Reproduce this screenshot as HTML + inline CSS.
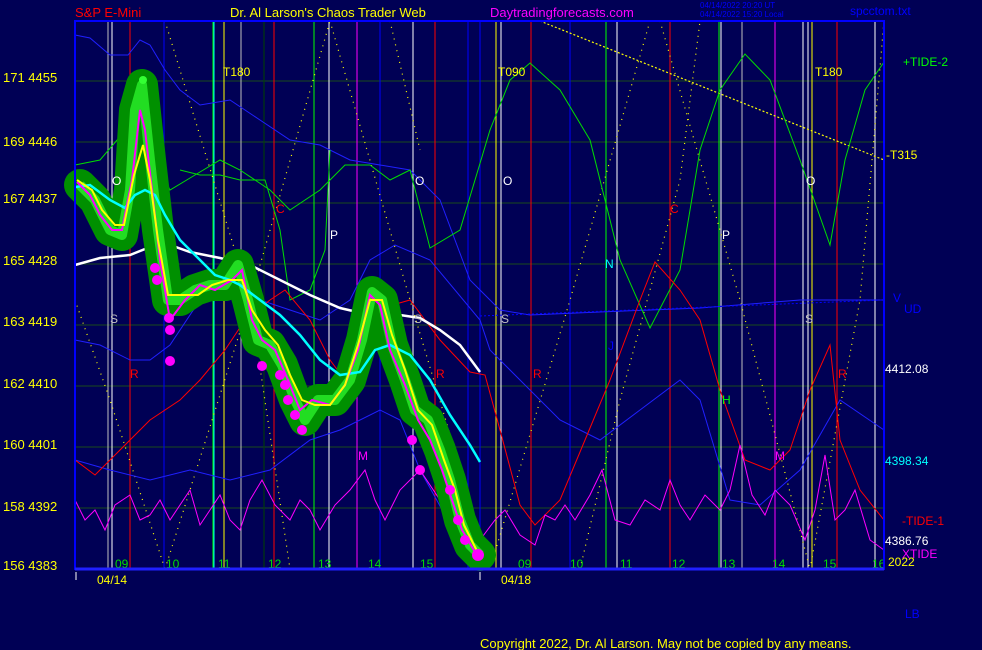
<!DOCTYPE html>
<html><head><style>
html,body{margin:0;padding:0;background:#000055;}
svg{display:block;font-family:"Liberation Sans",sans-serif;font-size:13px;}
</style></head><body>
<svg width="982" height="650" viewBox="0 0 982 650" xmlns="http://www.w3.org/2000/svg">
<rect width="982" height="650" fill="#000055"/>
<!-- header -->
<text x="75" y="17" fill="#ff0000" font-size="13">S&amp;P E-Mini</text>
<text x="230" y="17" fill="#ffff00" font-size="13">Dr. Al Larson's Chaos Trader Web</text>
<text x="490" y="17" fill="#ff00ff" font-size="13">Daytradingforecasts.com</text>
<text x="700" y="8" fill="#0000ff" font-size="8">04/14/2022 20:20 UT</text>
<text x="700" y="17" fill="#0000ff" font-size="8">04/14/2022 15:20 Local</text>
<text x="850" y="15" fill="#0000ff" font-size="12">spcctom.txt</text>
<!-- horizontal grid -->
<g stroke="#1a4a1a" stroke-width="1">
<line x1="75" y1="81" x2="884" y2="81"/><line x1="75" y1="142" x2="884" y2="142"/>
<line x1="75" y1="203" x2="884" y2="203"/><line x1="75" y1="264" x2="884" y2="264"/>
<line x1="75" y1="325" x2="884" y2="325"/><line x1="75" y1="386" x2="884" y2="386"/>
<line x1="75" y1="447" x2="884" y2="447"/><line x1="75" y1="508" x2="884" y2="508"/>
</g>
<!-- vertical lines -->
<g stroke-width="1">
<line x1="108" y1="21" x2="108" y2="569" stroke="#c0c0c0"/>
<line x1="112" y1="21" x2="112" y2="569" stroke="#ffffff"/>
<line x1="130" y1="21" x2="130" y2="569" stroke="#ff0000"/>
<line x1="164" y1="21" x2="164" y2="569" stroke="#0000ff"/>
<line x1="213" y1="21" x2="213" y2="569" stroke="#00ff00"/>
<line x1="214" y1="21" x2="214" y2="569" stroke="#00ffff"/>
<line x1="224" y1="21" x2="224" y2="569" stroke="#ffff00"/>
<line x1="241" y1="21" x2="241" y2="569" stroke="#c0c0c0"/>
<line x1="264" y1="21" x2="264" y2="569" stroke="#004400"/>
<line x1="274" y1="21" x2="274" y2="569" stroke="#ff0000"/>
<line x1="314" y1="21" x2="314" y2="569" stroke="#00ff00"/>
<line x1="329" y1="21" x2="329" y2="569" stroke="#ffffff"/>
<line x1="357" y1="21" x2="357" y2="569" stroke="#ff00ff"/>
<line x1="380" y1="21" x2="380" y2="569" stroke="#0000ff"/>
<line x1="413" y1="21" x2="413" y2="569" stroke="#ffffff"/>
<line x1="435" y1="21" x2="435" y2="569" stroke="#ff0000"/>
<line x1="468" y1="21" x2="468" y2="569" stroke="#0000ff"/>
<line x1="480" y1="21" x2="480" y2="569" stroke="#0000ff"/>
<line x1="496" y1="21" x2="496" y2="569" stroke="#ffff00"/>
<line x1="501" y1="21" x2="501" y2="569" stroke="#ffffff"/>
<line x1="531" y1="21" x2="531" y2="569" stroke="#ff0000"/>
<line x1="570" y1="21" x2="570" y2="569" stroke="#0000ff"/>
<line x1="606" y1="21" x2="606" y2="569" stroke="#00ff00"/>
<line x1="617" y1="21" x2="617" y2="569" stroke="#ffffff"/>
<line x1="670" y1="21" x2="670" y2="569" stroke="#ff0000"/>
<line x1="719" y1="21" x2="719" y2="569" stroke="#00ff00"/>
<line x1="721" y1="21" x2="721" y2="569" stroke="#ffffff"/>
<line x1="742" y1="21" x2="742" y2="569" stroke="#c0c0c0"/>
<line x1="775" y1="21" x2="775" y2="569" stroke="#ff00ff"/>
<line x1="803" y1="21" x2="803" y2="569" stroke="#ffffff"/>
<line x1="808" y1="21" x2="808" y2="569" stroke="#ffffff"/>
<line x1="812" y1="21" x2="812" y2="569" stroke="#ffff00"/>
<line x1="837" y1="21" x2="837" y2="569" stroke="#ff0000"/>
<line x1="875" y1="21" x2="875" y2="569" stroke="#ffffff"/>
</g>
<!-- yellow dotted diagonals -->
<g stroke="#ffff00" stroke-width="1.2" stroke-dasharray="1 5" fill="none">
<polyline points="75,300 110,400 165,569"/>
<polyline points="165,21 250,300 290,569"/>
<polyline points="165,569 250,300 330,21"/>
<polyline points="330,21 410,300 490,569"/>
<polyline points="390,21 420,150"/>
<polyline points="490,569 570,300 650,21"/>
<polyline points="660,21 740,300 810,569"/>
<polyline points="810,569 860,300 884,21"/>
<polyline points="580,569 620,400 680,180 700,21"/>
<polyline points="540,21 884,160" stroke-dasharray="2 2"/>
</g>
<!-- blue curves -->
<g fill="none" stroke-width="1">
<polyline stroke="#2020ff" points="75,35 90,38 110,55 128,55 140,40 150,45 165,70 180,90 200,105 230,100 260,120 290,140 320,145 350,160 380,165 410,170 440,200 470,280 500,310 530,315 600,312 700,308 800,300 884,300"/>
<polyline stroke="#2020ff" points="75,340 100,345 130,360 150,360 170,345 200,300 240,280 260,300 290,310 320,320 350,300 370,260 395,245 430,260 480,320 490,350 520,380 560,420 600,440 640,410 680,380 700,400 730,500 760,505 800,470 840,400 884,430"/>
<polyline stroke="#2020ff" points="75,460 110,470 150,480 190,470 230,480 270,470 310,440 340,430 380,410 400,420 420,470 470,560"/>
<polyline stroke="#0000ff" stroke-dasharray="2 2" points="480,316 884,300"/>
</g>
<!-- green TIDE-2 -->
<polyline fill="none" stroke="#00dd00" stroke-width="1" points="75,165 100,160 130,125 150,150 170,190 195,175 220,160 240,170 270,190 290,210 320,190 345,165 370,165 390,180 410,170 430,248 460,230 490,130 510,80 530,63 560,90 590,140 620,260 650,328 680,270 700,150 720,90 745,54 770,80 800,160 830,245 845,160 865,90 884,62"/>
<polyline fill="none" stroke="#00dd00" stroke-width="1" points="180,170 200,175 220,175 240,180 265,180 280,230 290,300 310,290 325,250 330,150"/>
<!-- red TIDE-1 -->
<polyline fill="none" stroke="#ff0000" stroke-width="1" points="75,460 95,475 120,450 150,420 180,400 200,380 225,350 245,320 270,300 285,290 310,320 330,360 345,380 375,310 410,300 440,340 470,372 485,375 500,430 520,505 535,525 560,500 585,440 610,380 640,300 655,262 680,290 700,320 720,390 745,460 770,470 790,450 810,390 830,345 840,440 860,490 884,520"/>
<!-- magenta XTIDE -->
<polyline fill="none" stroke="#ff00ff" stroke-width="1" points="75,500 85,520 95,510 105,530 115,505 130,495 140,520 150,515 160,500 170,520 180,505 190,490 200,525 210,510 220,495 230,520 240,530 250,500 262,480 275,505 290,520 300,500 310,510 320,530 335,505 350,490 365,470 375,500 385,520 400,490 420,470 440,500 460,520 480,540 495,520 505,510 520,535 535,545 545,515 555,520 565,505 575,520 590,495 602,470 615,520 630,525 645,500 660,510 670,480 680,505 690,520 705,495 720,510 730,490 740,445 752,495 765,515 775,490 790,505 805,540 815,510 825,455 835,520 845,510 855,490 870,540 884,550"/>
<!-- white MA -->
<polyline fill="none" stroke="#ffffff" stroke-width="2.5" points="75,265 100,258 130,255 155,245 170,245 190,252 220,258 250,265 280,280 310,295 340,308 370,315 400,315 420,318 440,330 460,345 480,372"/>
<!-- green glow -->
<polyline fill="none" stroke="#009000" stroke-width="32" stroke-linecap="round" stroke-linejoin="round" points="80,185 95,200 110,230 122,235 130,190 135,110 142,85 150,160 158,230 168,300 180,300 195,290 210,285 225,285 238,265 248,300 258,340 270,345 282,365 295,400 305,420 318,400 335,400 350,380 362,340 372,292 382,300 392,345 405,380 415,410 428,420 440,450 450,480 460,520 470,545 480,555"/>
<polyline fill="none" stroke="#22dd22" stroke-width="10" stroke-linejoin="round" points="80,185 95,200 110,230 122,235 130,190 135,110 142,85 150,160 158,230 168,300 180,300 195,290 210,285 225,285 238,265 248,300 258,340 270,345 282,365 295,400 305,420 318,400 335,400 350,380 362,340 372,292 382,300 392,345 405,380 415,410 428,420 440,450 450,480 460,520 470,545 480,555"/>
<!-- cyan -->
<polyline fill="none" stroke="#00ffff" stroke-width="2.5" points="75,187 90,185 110,200 125,208 135,195 145,190 155,195 165,215 180,240 200,260 215,275 230,280 240,285 260,300 280,315 300,335 320,360 340,375 360,372 375,350 390,345 410,355 430,380 450,415 470,445 480,462"/>
<!-- magenta price -->
<polyline fill="none" stroke="#ff00ff" stroke-width="2" points="77,182 90,195 100,215 112,230 122,230 132,180 140,110 145,130 152,190 160,260 170,320 185,300 200,285 215,290 232,280 242,270 252,320 262,340 275,350 288,380 300,410 312,400 330,405 345,385 358,350 370,295 380,305 390,350 405,385 418,420 430,440 442,470 452,500 462,530 475,552"/>
<polyline fill="none" stroke="#ffff00" stroke-width="2" points="77,180 92,190 102,210 115,225 124,225 134,175 143,145 150,180 158,240 168,295 182,295 198,295 212,285 228,280 242,280 252,310 265,330 278,345 290,375 302,400 315,405 330,405 345,385 358,345 370,300 382,300 392,335 405,370 418,410 432,425 444,460 455,490 464,525 478,553"/>
<g fill="#ff00ff">
<circle cx="155" cy="268" r="5"/><circle cx="157" cy="280" r="5"/><circle cx="169" cy="318" r="5"/><circle cx="170" cy="330" r="5"/><circle cx="170" cy="361" r="5"/>
<circle cx="262" cy="366" r="5"/><circle cx="280" cy="375" r="5"/><circle cx="285" cy="385" r="5"/><circle cx="288" cy="400" r="5"/><circle cx="295" cy="415" r="5"/><circle cx="302" cy="430" r="5"/>
<circle cx="412" cy="440" r="5"/><circle cx="420" cy="470" r="5"/><circle cx="450" cy="490" r="5"/><circle cx="458" cy="520" r="5"/><circle cx="465" cy="540" r="5"/><circle cx="478" cy="555" r="6"/>
<circle cx="143" cy="80" r="4" fill="#33ff33"/>
</g>
<!-- letters -->
<g font-size="12">
<text x="112" y="185" fill="#ffffff">O</text><text x="415" y="185" fill="#ffffff">O</text><text x="503" y="185" fill="#ffffff">O</text><text x="806" y="185" fill="#ffffff">O</text>
<text x="110" y="323" fill="#c0c0c0">S</text><text x="414" y="323" fill="#c0c0c0">S</text><text x="501" y="323" fill="#c0c0c0">S</text><text x="805" y="323" fill="#c0c0c0">S</text>
<text x="130" y="378" fill="#ff0000">R</text><text x="436" y="378" fill="#ff0000">R</text><text x="533" y="378" fill="#ff0000">R</text><text x="838" y="378" fill="#ff0000">R</text>
<text x="276" y="213" fill="#ff0000">C</text><text x="670" y="213" fill="#ff0000">C</text>
<text x="330" y="239" fill="#ffffff">P</text><text x="722" y="239" fill="#ffffff">P</text>
<text x="358" y="460" fill="#ff00ff">M</text><text x="775" y="460" fill="#ff00ff">M</text>
<text x="605" y="268" fill="#00ffff">N</text><text x="722" y="404" fill="#00ff00">H</text><text x="608" y="350" fill="#0000ff">J</text>
<text x="223" y="76" fill="#ffff00">T180</text><text x="498" y="76" fill="#ffff00">T090</text><text x="815" y="76" fill="#ffff00">T180</text>
</g>
<!-- hour labels -->
<g fill="#00dd00" font-size="12">
<text x="115" y="568">09</text><text x="166" y="568">10</text><text x="218" y="568">11</text><text x="268" y="568">12</text><text x="318" y="568">13</text><text x="368" y="568">14</text><text x="420" y="568">15</text>
<text x="518" y="568">09</text><text x="570" y="568">10</text><text x="620" y="568">11</text><text x="672" y="568">12</text><text x="722" y="568">13</text><text x="772" y="568">14</text><text x="823" y="568">15</text><text x="872" y="568">16</text>
</g>
<!-- frame -->
<rect x="75" y="21" width="809" height="548" fill="none" stroke="#0000ff" stroke-width="2"/>
<line x1="75" y1="569" x2="884" y2="569" stroke="#2020ff" stroke-width="3"/>
<!-- y axis -->
<g fill="#ffff00" font-size="13">
<text x="3" y="82">171  4455</text><text x="3" y="146">169  4446</text><text x="3" y="203">167  4437</text>
<text x="3" y="265">165  4428</text><text x="3" y="326">163  4419</text><text x="3" y="388">162  4410</text>
<text x="3" y="449">160  4401</text><text x="3" y="511">158  4392</text><text x="3" y="570">156  4383</text>
</g>
<g stroke="#ffffff"><line x1="76" y1="572" x2="76" y2="580"/><line x1="480" y1="572" x2="480" y2="580"/></g>
<text x="97" y="584" fill="#ffff00" font-size="12">04/14</text>
<text x="501" y="584" fill="#ffff00" font-size="12">04/18</text>
<!-- right labels -->
<text x="903" y="66" fill="#00ff00" font-size="12">+TIDE-2</text>
<text x="886" y="159" fill="#ffff00" font-size="12">-T315</text>
<text x="893" y="302" fill="#0000ff" font-size="12">V</text>
<text x="904" y="313" fill="#0000ff" font-size="12">UD</text>
<text x="885" y="373" fill="#ffffff" font-size="12">4412.08</text>
<text x="885" y="465" fill="#00ffff" font-size="12">4398.34</text>
<text x="902" y="525" fill="#ff0000" font-size="12">-TIDE-1</text>
<text x="885" y="545" fill="#ffffff" font-size="12">4386.76</text>
<text x="902" y="558" fill="#ff00ff" font-size="12">XTIDE</text>
<text x="888" y="566" fill="#ffff00" font-size="12">2022</text>
<text x="905" y="618" fill="#0000ff" font-size="12">LB</text>
<text x="480" y="648" fill="#ffff00" font-size="13">Copyright 2022, Dr. Al Larson. May not be copied by any means.</text>
</svg>
</body></html>
